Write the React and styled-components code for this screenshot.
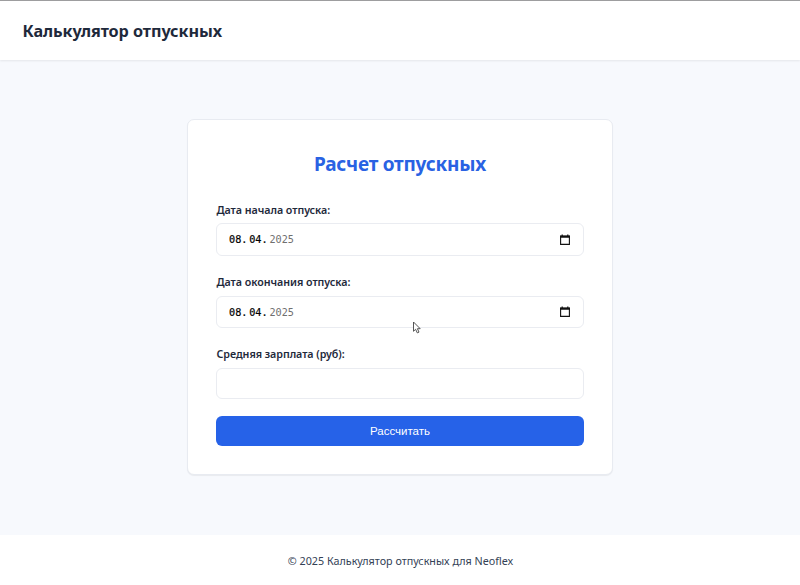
import React from "react";
import styled, { createGlobalStyle } from "styled-components";

const GlobalStyle = createGlobalStyle`
  *, *::before, *::after { box-sizing: border-box; }
  body {
    margin: 0;
    background: #f7f9fd;
    color: #1e293b;
    font-family: "Noto Sans", "Open Sans", sans-serif;
  }
`;

const Page = styled.div`
  display: flex;
  flex-direction: column;
  height: 585px;
  overflow: hidden;
`;

const Header = styled.header`
  display: flex;
  align-items: center;
  flex: none;
  height: 60px;
  padding: 0 22.5px;
  background: #fff;
  border-top: 1px solid #9d9d9f;
  box-shadow: 0 1px 2px rgba(0, 0, 0, 0.08);
`;

const Brand = styled.h1`
  margin: 0;
  font-size: 16.2px;
  font-weight: 700;
  line-height: 24px;
  white-space: nowrap;
  letter-spacing: -0.06px;
`;

const Main = styled.main`
  flex: 1;
  display: flex;
  justify-content: center;
  align-items: flex-start;
  padding-top: 59px;
`;

const Card = styled.form`
  width: 426px;
  height: 356px;
  padding: 30px 28px 0;
  border: 1px solid #e8ebf1;
  border-radius: 7px;
  background: #fff;
  box-shadow: 0 1px 1px rgba(0, 0, 0, 0.06);
`;

const Title = styled.h2`
  margin: 0 0 25px;
  height: 28px;
  line-height: 28px;
  text-align: center;
  color: #2962e3;
  font-size: 19px;
  font-weight: 700;
  letter-spacing: -0.22px;
  white-space: nowrap;
`;

const Field = styled.div`
  display: flex;
  flex-direction: column;
  margin-bottom: ${(p) => p.$gap || "17px"};
`;

const Label = styled.label`
  height: 14px;
  margin-bottom: 6px;
  padding-left: 0.5px;
  line-height: ${(p) => p.$line || "14px"};
  font-size: 10.7px;
  font-weight: 600;
  white-space: nowrap;
  letter-spacing: -0.04px;
`;

const InputBox = styled.div`
  display: flex;
  align-items: center;
  justify-content: space-between;
  height: ${(p) => p.$height || "33px"};
  padding: 0 13px 0 12px;
  border: 1px solid #eaecf1;
  border-radius: 6px;
  background: #fff;
`;

const DateValue = styled.span`
  display: flex;
  padding-top: 1.5px;
  font-family: "DejaVu Sans Mono", "Liberation Mono", monospace;
  font-size: 10.2px;
  line-height: 14px;
`;

const DatePart = styled.span`
  color: ${(p) => (p.$muted ? "#707070" : "#000")};
  -webkit-text-stroke: ${(p) => (p.$muted ? "0" : "0.2px #000")};
  margin-right: 1.8px;
`;

const SubmitButton = styled.button`
  display: block;
  width: 100%;
  height: 30px;
  padding: 0;
  border: 0;
  border-radius: 6px;
  background: #2662e8;
  color: #fff;
  font-family: "Liberation Sans", Arial, sans-serif;
  font-size: 11.5px;
  line-height: 30px;
`;

const Footer = styled.footer`
  flex: none;
  height: 50px;
  padding: 1px 0 0 1px;
  background: #fff;
  color: #334155;
  text-align: center;
  font-size: 10.75px;
  line-height: 50px;
`;

const Pointer = styled.svg`
  position: absolute;
  left: 412px;
  top: 321px;
  width: 9px;
  height: 13px;
`;

const CalendarIcon = () => (
  <svg width="10" height="12" viewBox="0 0 10 12" fill="none">
    <path d="M.6 2.2h8.8v8.2H.6z" stroke="#111" strokeWidth="1.1" />
    <path d="M0 1.5h10v2.3H0zM1.6.5h1.2v1.5H1.6zM7.2.5h1.2v1.5H7.2z" fill="#111" />
  </svg>
);

const DateField = ({ label, height, line }) => (
  <Field $gap="20px">
    <Label $line={line}>{label}</Label>
    <InputBox $height={height}>
      <DateValue>
        <DatePart>08.</DatePart>
        <DatePart>04.</DatePart>
        <DatePart $muted>2025</DatePart>
      </DateValue>
      <CalendarIcon />
    </InputBox>
  </Field>
);

export default function App() {
  return (
    <Page>
      <GlobalStyle />
      <Header>
        <Brand>Калькулятор отпускных</Brand>
      </Header>
      <Main>
        <Card>
          <Title>Расчет отпускных</Title>
          <DateField label="Дата начала отпуска:" height="33px" />
          <DateField label="Дата окончания отпуска:" height="32px" line="12px" />
          <Field>
            <Label $line="12px">Средняя зарплата (руб):</Label>
            <InputBox $height="31px" />
          </Field>
          <SubmitButton type="button">Рассчитать</SubmitButton>
        </Card>
      </Main>
      <Footer>© 2025 Калькулятор отпускных для Neoflex</Footer>
      <Pointer viewBox="0 0 9 13">
        <path
          d="M1.5 1v9.3l2.1-2 1.7 3.6 1.7-.8-1.6-3.4h2.8z"
          fill="#fff"
          stroke="#444"
          strokeWidth=".9"
        />
      </Pointer>
    </Page>
  );
}
